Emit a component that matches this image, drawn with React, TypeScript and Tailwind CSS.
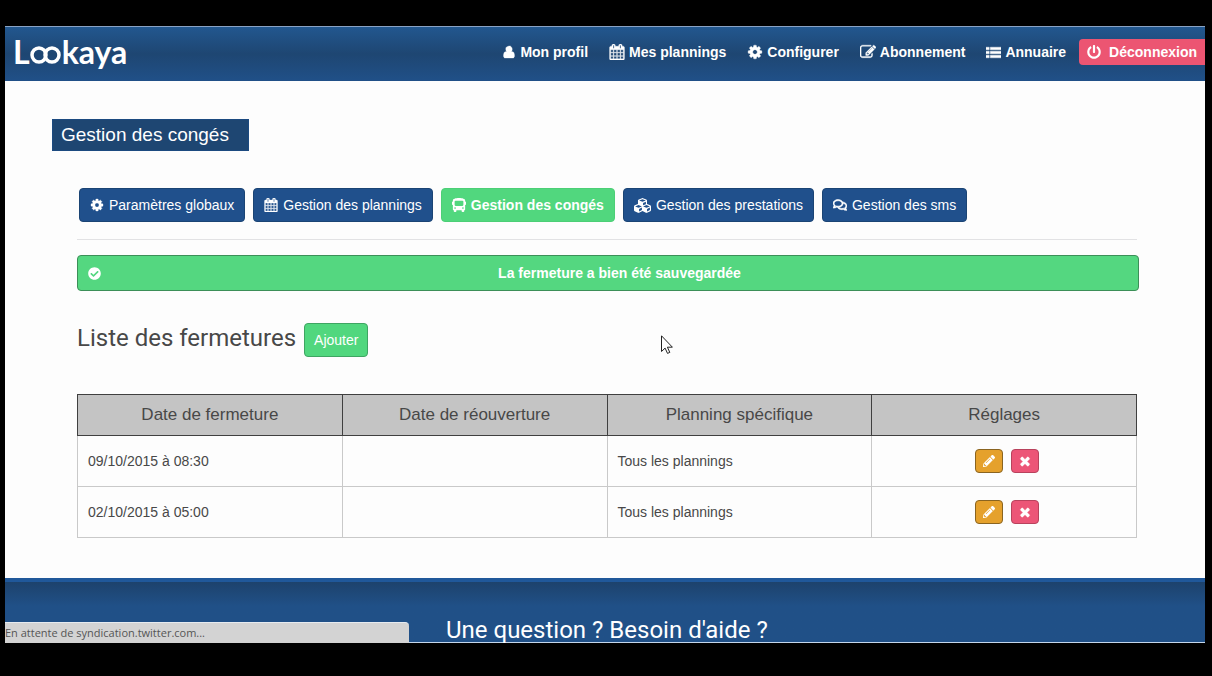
import type { ReactNode } from "react"
import { FaBus, FaCheckCircle, FaCubes, FaPencilAlt, FaPowerOff, FaRegComments } from "react-icons/fa"

function Glyph({ d, className = "size-4" }: { d: string; className?: string }) {
    return (
        <svg
            viewBox="0 0 1792 1792"
            fill="currentColor"
            stroke="currentColor"
            strokeWidth="40"
            className={`shrink-0 ${className}`}
            aria-hidden="true"
        >
            <path d={d} />
        </svg>
    )
}

const CALENDAR =
    "M192 1664h288v-288h-288v288zm352 0h320v-288h-320v288zm-352-352h288v-320h-288v320zm352 0h320v-320h-320v320zm-352-384h288v-288h-288v288zm736 736h320v-288h-320v288zm-384-736h320v-288h-320v288zm768 736h288v-288h-288v288zm-384-352h320v-320h-320v320zm-352-864v-288q0-13-9.500-22.500t-22.500-9.500h-64q-13 0-22.500 9.500t-9.500 22.500v288q0 13 9.500 22.500t22.500 9.500h64q13 0 22.500-9.500t9.500-22.500zm736 864h288v-320h-288v320zm-384-384h320v-288h-320v288zm384 0h288v-288h-288v288zm32-480v-288q0-13-9.500-22.500t-22.500-9.500h-64q-13 0-22.500 9.500t-9.500 22.500v288q0 13 9.500 22.500t22.500 9.500h64q13 0 22.500-9.500t9.500-22.500zm384-64v1280q0 52-38 90t-90 38h-1408q-52 0-90-38t-38-90v-1280q0-52 38-90t90-38h128v-96q0-66 47-113t113-47h64q66 0 113 47t47 113v96h384v-96q0-66 47-113t113-47h64q66 0 113 47t47 113v96h128q52 0 90 38t38 90z"
const USER =
    "M1600 1399q0 109-62.500 187t-150.500 78h-982q-88 0-150.500-78t-62.500-187q0-85 8.500-160.500t31.500-152 58.500-131 94-89 198.500-34.500q131 64 313 64t313-64q140 0 198.500 34.500t94 89 58.500 131 31.500 152 8.500 160.500zm-288-887q0 219-112.500 351.500t-303.500 132.500-303.500-132.500-112.500-351.500 112.500-271.500 303.500-112.500 303.500 112.500 112.500 271.500z"
const EDIT =
    "M888 1184l116-116-152-152-116 116v56h96v96h56zm440-720q-16-16-33 1l-350 350q-17 17-1 33t33-1l350-350q17-17 1-33zm80 594v190q0 119-84.500 203.500t-203.500 84.500h-832q-119 0-203.500-84.500t-84.500-203.500v-832q0-119 84.500-203.500t203.500-84.500h832q63 0 117 25 15 7 18 23 3 17-9 29l-49 49q-14 14-32 8-23-6-45-6h-832q-66 0-113 47t-47 113v832q0 66 47 113t113 47h832q66 0 113-47t47-113v-126q0-13 9-22l64-64q15-15 35-7t20 29zm-96-738l288 288-672 672h-288v-288zm444 132l-92 92-288-288 92-92q28-28 68-28t68 28l152 152q28 28 28 68t-28 68z"
const COG =
    "M1152 896q0-106-75-181t-181-75-181 75-75 181 75 181 181 75 181-75 75-181zm512-109v222q0 12-8 23t-20 13l-185 28q-19 54-39 91 35 50 107 138 10 12 10 25t-9 23q-27 37-99 108t-94 71q-12 0-26-9l-138-108q-44 23-91 38-16 136-29 186-7 28-36 28h-222q-14 0-24.500-8.500t-11.500-21.500l-28-184q-49-16-90-37l-141 107q-10 9-25 9-14 0-25-11-126-114-165-168-7-10-7-23 0-12 8-23 15-21 51-66.500t54-70.500q-27-50-41-99l-183-27q-13-2-21-12.500t-8-23.500v-222q0-12 8-23t19-13l186-28q14-46 39-92-40-57-107-138-10-12-10-24 0-10 9-23 26-36 98.500-107.500t94.500-71.500q13 0 26 10l138 107q44-23 91-38 16-136 29-186 7-28 36-28h222q14 0 24.500 8.500t11.500 21.500l28 184q49 16 90 37l142-107q9-9 24-9 13 0 25 10 129 119 165 170 7 8 7 22 0 12-8 23-15 21-51 66.500t-54 70.500q26 50 41 98l183 28q13 2 21 12.500t8 23.500z"
const LIST = "M0 256h384v320h-384zM512 256h1280v320h-1280zM0 736h384v320h-384zM512 736h1280v320h-1280zM0 1216h384v320h-384zM512 1216h1280v320h-1280z"
const TIMES =
    "M1490 1322q0 40-28 68l-136 136q-28 28-68 28t-68-28l-294-294-294 294q-28 28-68 28t-68-28l-136-136q-28-28-28-68t28-68l294-294-294-294q-28-28-28-68t28-68l136-136q28-28 68-28t68 28l294 294 294-294q28-28 68-28t68 28l136 136q28 28 28 68t-28 68l-294 294 294 294q28 28 28 68z"

const navItems: { label: string; icon: ReactNode }[] = [
    { label: "Mon profil", icon: <Glyph d={USER} className="size-[14px]" /> },
    { label: "Mes plannings", icon: <Glyph d={CALENDAR} /> },
    { label: "Configurer", icon: <Glyph d={COG} /> },
    { label: "Abonnement", icon: <Glyph d={EDIT} /> },
    { label: "Annuaire", icon: <Glyph d={LIST} className="size-[15px]" /> },
]

const tabs: { label: string; icon: ReactNode; active?: boolean }[] = [
    { label: "Paramètres globaux", icon: <Glyph d={COG} className="size-[14px]" /> },
    { label: "Gestion des plannings", icon: <Glyph d={CALENDAR} className="size-[14px]" /> },
    { label: "Gestion des congés", icon: <FaBus className="size-[14px]" />, active: true },
    { label: "Gestion des prestations", icon: <FaCubes className="size-[17px]" /> },
    { label: "Gestion des sms", icon: <FaRegComments className="size-[14px]" stroke="currentColor" strokeWidth={24} /> },
]

const columns = ["Date de fermeture", "Date de réouverture", "Planning spécifique", "Réglages"]

const closures = [
    { from: "09/10/2015 à 08:30", to: "", planning: "Tous les plannings" },
    { from: "02/10/2015 à 05:00", to: "", planning: "Tous les plannings" },
]

function Logo() {
    return (
        <a
            href="#"
            aria-label="Lookaya"
            className="flex items-center font-[Lato,sans-serif] text-[32px] leading-10 font-bold text-white"
        >
            <span>L</span>
            <svg viewBox="0 0 32 20" className="mt-[5px] h-5 w-8" fill="none" stroke="currentColor" strokeWidth="3.500" aria-hidden="true">
                <circle cx="9" cy="10" r="7" />
                <circle cx="22" cy="10" r="7" />
            </svg>
            <span>kaya</span>
        </a>
    )
}

function Header() {
    return (
        <header className="flex h-[55px] items-center justify-between border-t border-[#8aa3c4] bg-linear-to-b from-[#22578f] via-[#1e4672] to-[#205088] pb-1 pl-2">
            <Logo />
            <nav className="flex items-center gap-[21px] text-sm font-bold text-white">
                {navItems.map((item) => (
                    <a key={item.label} href="#" className="flex items-center gap-1 whitespace-nowrap">
                        {item.icon}
                        {item.label}
                    </a>
                ))}
                <a
                    href="#"
                    className="-ml-2 flex h-[26px] items-center gap-2 rounded-l bg-[#ec5572] px-2 whitespace-nowrap"
                >
                    <FaPowerOff className="size-[14px]" />
                    Déconnexion
                </a>
            </nav>
        </header>
    )
}

function Tabs() {
    return (
        <div className="flex flex-wrap gap-2 pl-0.5 text-sm text-white">
            {tabs.map((tab) => (
                <button
                    key={tab.label}
                    type="button"
                    className={
                        tab.active
                            ? "flex h-[34px] items-center gap-[5px] rounded border border-[#4ccf76] bg-[#51d77e] px-2.5 font-bold whitespace-nowrap"
                            : "flex h-[34px] items-center gap-[5px] rounded border border-[#1b4474] bg-[#20508c] px-2.5 whitespace-nowrap"
                    }
                >
                    {tab.icon}
                    {tab.label}
                </button>
            ))}
        </div>
    )
}

function ClosureTable() {
    return (
        <table className="mt-9 w-full table-fixed border-collapse text-sm">
            <thead>
                <tr className="h-[41px] bg-[#c4c4c4] text-[17px] text-[#484848]">
                    {columns.map((column) => (
                        <th key={column} className="border border-[#3f3f3f] font-normal">
                            {column}
                        </th>
                    ))}
                </tr>
            </thead>
            <tbody>
                {closures.map((row) => (
                    <tr key={row.from} className="h-[51px]">
                        <td className="border border-[#c9c9c9] px-2.5">{row.from}</td>
                        <td className="border border-[#c9c9c9] px-2.5">{row.to}</td>
                        <td className="border border-[#c9c9c9] px-2.5">{row.planning}</td>
                        <td className="border border-[#c9c9c9]">
                            <div className="flex justify-center gap-2 pl-1.5 text-white">
                                <button
                                    type="button"
                                    aria-label="Modifier"
                                    className="flex h-6 w-7 items-center justify-center rounded border border-[#8a6420] bg-[#e5a12c]"
                                >
                                    <FaPencilAlt className="size-3" />
                                </button>
                                <button
                                    type="button"
                                    aria-label="Supprimer"
                                    className="flex h-6 w-7 items-center justify-center rounded border border-[#b8425d] bg-[#ec5577]"
                                >
                                    <Glyph d={TIMES} className="size-[14px]" />
                                </button>
                            </div>
                        </td>
                    </tr>
                ))}
            </tbody>
        </table>
    )
}

export default function App() {
    return (
        <div className="min-h-screen bg-black pt-[26px] pr-[7px] pb-[33px] pl-[5px] font-['Liberation_Sans',Arial,sans-serif]">
            <div className="relative bg-[#fdfdfd] text-[#484848]">
                <Header />

                <main className="pt-[38px] pr-[68px] pb-10 pl-[72px]">
                    <h1 className="-ml-[25px] flex h-8 w-fit items-center border border-[#1c4a80] bg-[#1e4672] pr-[19px] pl-2 text-[19px] text-white">
                        Gestion des congés
                    </h1>

                    <div className="mt-[37px]">
                        <Tabs />
                    </div>

                    <hr className="mt-[17px] border-[#e2e2e4]" />

                    <div
                        role="status"
                        className="mt-[15px] -mr-0.5 flex h-9 items-center rounded border border-[#3c8f58] bg-[#54d780] px-2.5 text-sm font-bold text-white"
                    >
                        <FaCheckCircle className="size-[13px]" />
                        <span className="flex-1 pl-2.5 text-center">La fermeture a bien été sauvegardée</span>
                    </div>

                    <div className="mt-[31px] flex items-center gap-2">
                        <h2 className="pb-1 font-[Roboto,sans-serif] text-2xl">Liste des fermetures</h2>
                        <button
                            type="button"
                            className="h-[34px] rounded border border-[#3fa562] bg-[#51d77e] px-[9px] text-sm text-white"
                        >
                            Ajouter
                        </button>
                    </div>

                    <ClosureTable />
                </main>

                <footer className="border-t-4 border-b border-[#20589a] border-b-[#c5d6ea] bg-linear-to-b from-[#1d426c] to-[#205087] to-40% pt-9">
                    <h2 className="pl-[441px] font-[Roboto,sans-serif] text-2xl leading-6 text-white">
                        Une question ? Besoin d'aide ?
                    </h2>
                </footer>

                {/* Browser status bubble */}
                <div className="absolute bottom-0 left-0 w-[404px] rounded-tr border-t border-[#e6ebf0] bg-[#d3d3d3] font-['Open_Sans',sans-serif] text-[11px] leading-5 text-[#555]">
                    En attente de syndication.twitter.com...
                </div>
            </div>

            {/* Mouse pointer */}
            <svg viewBox="0 0 12 19" className="pointer-events-none absolute top-[335px] left-[661px] h-[19px] w-3" aria-hidden="true">
                <path
                    d="M.5.800v15.700l3.600-3.400 2.400 5.300 2.300-1-2.400-5.200h5z"
                    fill="#fff"
                    stroke="#222"
                    strokeWidth="1"
                />
            </svg>
        </div>
    )
}
